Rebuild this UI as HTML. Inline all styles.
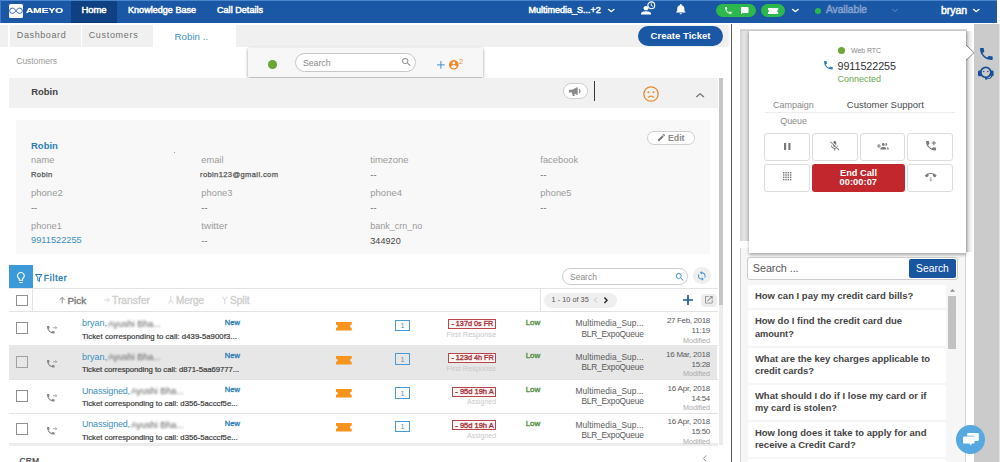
<!DOCTYPE html>
<html><head><meta charset="utf-8"><title>Ameyo</title>
<style>
*{box-sizing:border-box;margin:0;padding:0}
html,body{width:1000px;height:462px;overflow:hidden;background:#fff;font-family:"Liberation Sans",sans-serif;color:#555}
.a{position:absolute}
svg{position:absolute;overflow:visible}
.t{position:absolute;white-space:nowrap}
.btn{position:absolute;border:1px solid #dcdcdc;background:#fff;border-radius:3px}
.cb{position:absolute;width:12px;height:12px;border:1px solid #909090;background:#fff}
.kb{position:absolute;left:748px;width:198px;background:#fff;border-radius:2px}
.blur{filter:blur(1.1px)}
</style></head><body>
<div class="a" style="left:0px;top:0px;width:997.00px;height:23.30px;background:#1a57a4;"></div>
<div class="a" style="left:71px;top:0px;width:46.00px;height:23.30px;background:#0e4082;border-bottom:1px solid #0a3572"></div>
<div class="a" style="left:0px;top:0px;width:997.00px;height:1.00px;background:#4a86cc;"></div>
<div class="a" style="left:0px;top:0px;width:1.00px;height:23.30px;background:#3f7cc6;"></div>
<div class="a" style="left:9px;top:4px;width:14.00px;height:13.50px;background:#fff;border-radius:1.5px"></div>
<svg style="left:9px;top:4px;" width="14.00" height="13.50" viewBox="0 0 14 13.5" preserveAspectRatio="none"><path d="M7 6.750C5.300 4.300 4.200 4.100 3.300 4.100a2.650 2.650 0 0 0 0 5.300C4.200 9.400 5.300 9.200 7 6.750C8.700 4.300 9.800 4.100 10.700 4.100a2.650 2.650 0 0 1 0 5.300C9.800 9.400 8.700 9.200 7 6.750z" fill="none" stroke="#1a57a4" stroke-width=".9"/></svg>
<svg style="left:607.5px;top:8.5px;" width="6.50" height="3.00" viewBox="-0.8 -0.8 9.600000000000001 5.6" preserveAspectRatio="none"><polyline points="0,0 4,4 8,0" fill="none" stroke="#fff" stroke-width="2.3" stroke-linecap="round" stroke-linejoin="round"/></svg>
<svg style="left:640.7px;top:6px;" width="10.10" height="8.50" viewBox="4 4 16 16" preserveAspectRatio="none"><path d="M12 12c2.21 0 4-1.79 4-4s-1.79-4-4-4-4 1.79-4 4 1.79 4 4 4zm0 2c-2.67 0-8 1.34-8 4v2h16v-2c0-2.66-5.33-4-8-4z" fill="#fff"/></svg>
<svg style="left:646.8px;top:0.8px;" width="8.60" height="8.60" viewBox="0 0 10 10" preserveAspectRatio="none"><circle cx="5" cy="5" r="4" fill="#1a57a4" stroke="#fff" stroke-width="1.300"/><path d="M5 2.600V5.200L6.800 6.200" fill="none" stroke="#fff" stroke-width="1.100"/></svg>
<svg style="left:676px;top:4.3px;" width="9.60" height="10.20" viewBox="4 2.5 16 19.5" preserveAspectRatio="none"><path d="M12 22c1.1 0 2-.9 2-2h-4c0 1.1.89 2 2 2zm6-6v-5c0-3.07-1.64-5.64-4.5-6.32V4c0-.83-.67-1.5-1.5-1.5s-1.5.67-1.5 1.5v.68C7.63 5.36 6 7.92 6 11v5l-2 2v1h16v-1l-2-2z" fill="#fff"/></svg>
<div class="a" style="left:716.3px;top:4.3px;width:40.20px;height:12.70px;background:#2db84d;border-radius:7px"></div>
<svg style="left:725px;top:7.2px;" width="6.70" height="6.80" viewBox="3 3 18 18" preserveAspectRatio="none"><path d="M6.62 10.79c1.44 2.83 3.76 5.14 6.59 6.59l2.2-2.2c.27-.27.67-.36 1.02-.24 1.12.37 2.33.57 3.57.57.55 0 1 .45 1 1V20c0 .55-.45 1-1 1-9.39 0-17-7.61-17-17 0-.55.45-1 1-1h3.5c.55 0 1 .45 1 1 0 1.25.2 2.45.57 3.57.11.35.03.74-.25 1.02l-2.2 2.2z" fill="#fff"/></svg>
<svg style="left:740.8px;top:7px;" width="7.50" height="7.50" viewBox="2 2 20 20" preserveAspectRatio="none"><path d="M20 2H4c-1.1 0-2 .9-2 2v18l4-4h14c1.1 0 2-.9 2-2V4c0-1.1-.9-2-2-2z" fill="#fff"/></svg>
<div class="a" style="left:760.5px;top:4.3px;width:24.20px;height:12.70px;background:#2db84d;border-radius:7px"></div>
<svg style="left:767.5px;top:7.5px;" width="10.20" height="6.00" viewBox="0 0 16 10" preserveAspectRatio="none"><path d="M0 0h16v3.200a1.800 1.800 0 0 0 0 3.600V10H0V6.800a1.800 1.800 0 0 0 0-3.600z" fill="#fff"/></svg>
<svg style="left:792px;top:8.5px;" width="6.70" height="3.00" viewBox="-0.8 -0.8 9.600000000000001 5.6" preserveAspectRatio="none"><polyline points="0,0 4,4 8,0" fill="none" stroke="#fff" stroke-width="2.3" stroke-linecap="round" stroke-linejoin="round"/></svg>
<div class="a" style="left:814.5px;top:8px;width:6.00px;height:6.00px;background:#2db84d;border-radius:50%"></div>
<svg style="left:892px;top:8.5px;" width="6.00" height="2.80" viewBox="-0.8 -0.8 9.600000000000001 5.6" preserveAspectRatio="none"><polyline points="0,0 4,4 8,0" fill="none" stroke="#6f8fc2" stroke-width="1.6" stroke-linecap="round" stroke-linejoin="round"/></svg>
<svg style="left:973px;top:8.5px;" width="6.50" height="3.00" viewBox="-0.8 -0.8 9.600000000000001 5.6" preserveAspectRatio="none"><polyline points="0,0 4,4 8,0" fill="none" stroke="#fff" stroke-width="2.3" stroke-linecap="round" stroke-linejoin="round"/></svg>
<div class="a" style="left:0px;top:24.8px;width:7.80px;height:22.70px;background:#f0f0f0;"></div>
<div class="a" style="left:9.8px;top:24.8px;width:70.90px;height:22.70px;background:#f0f0f0;"></div>
<div class="a" style="left:82.3px;top:24.8px;width:70.70px;height:22.70px;background:#f0f0f0;"></div>
<div class="a" style="left:236px;top:24.8px;width:493.00px;height:22.70px;background:#f0f0f0;"></div>
<div class="a" style="left:638px;top:26px;width:84.50px;height:19.50px;background:#1a57a4;border-radius:10px"></div>
<div class="a" style="left:248px;top:48px;width:235.00px;height:28.50px;background:#f7f7f7;box-shadow:0 1px 3px rgba(0,0,0,.4)"></div>
<div class="a" style="left:268.2px;top:60.4px;width:8.60px;height:8.60px;background:#6aa638;border-radius:50%"></div>
<div class="a" style="left:294.6px;top:52.5px;width:121.70px;height:19.50px;background:#fff;border:1px solid #c8c8c8;border-radius:10px"></div>
<svg style="left:401.7px;top:58.3px;" width="8.60" height="8.00" viewBox="3 3 17.5 17.5" preserveAspectRatio="none"><path d="M15.5 14h-.79l-.28-.27C15.41 12.59 16 11.11 16 9.5 16 5.91 13.09 3 9.5 3S3 5.91 3 9.5 5.91 16 9.5 16c1.61 0 3.09-.59 4.23-1.57l.27.28v.79l5 4.99L20.49 19l-4.99-5zm-6 0C7.01 14 5 11.99 5 9.5S7.01 5 9.5 5 14 7.01 14 9.5 11.99 14 9.5 14z" fill="#8a8a8a"/></svg>
<svg style="left:436.8px;top:60.8px;" width="7.80" height="7.80" viewBox="0 0 8 8" preserveAspectRatio="none"><path d="M4 0V8M0 4H8" stroke="#3d8fd0" stroke-width="1" fill="none"/></svg>
<svg style="left:448.8px;top:59.6px;" width="9.60" height="9.60" viewBox="2 2 20 20" preserveAspectRatio="none"><path d="M12 2C6.480 2 2 6.480 2 12s4.480 10 10 10 10-4.480 10-10S17.520 2 12 2zm0 3c1.660 0 3 1.340 3 3s-1.340 3-3 3-3-1.340-3-3 1.340-3 3-3zm0 14.200c-2.500 0-4.710-1.280-6-3.220.030-1.990 4-3.080 6-3.080 1.990 0 5.970 1.090 6 3.080-1.290 1.940-3.500 3.220-6 3.220z" fill="#ee8a2a"/></svg>
<div class="a" style="left:8.5px;top:77.8px;width:709.80px;height:30.20px;background:#f1f1f1;"></div>
<div class="a" style="left:563px;top:82.8px;width:25.20px;height:16.20px;background:#fff;border:1px solid #cfcfcf;border-radius:9px"></div>
<svg style="left:569px;top:86.5px;" width="13.50" height="9.00" viewBox="0 0 14 9" preserveAspectRatio="none"><path d="M0 2.800h3.200L9 0v8.200L3.200 5.600H0zM3 5.800h2.200l.9 3.200H3.900z" fill="#8a8a8a"/><path d="M10.300 2.200a2.200 2.200 0 0 1 0 3.800" fill="none" stroke="#8a8a8a" stroke-width="1.300"/></svg>
<div class="a" style="left:594.2px;top:81.4px;width:1.30px;height:19.40px;background:#3a3a3a;"></div>
<svg style="left:643.3px;top:85.5px;" width="16.00" height="16.00" viewBox="0 0 16 16" preserveAspectRatio="none"><circle cx="8" cy="8" r="7.200" fill="none" stroke="#e8892f" stroke-width="1.300"/><circle cx="5.500" cy="6.200" r="1" fill="#e8892f"/><circle cx="10.500" cy="6.200" r="1" fill="#e8892f"/><path d="M5 11.500Q8 8.800 11 11.500" fill="none" stroke="#e8892f" stroke-width="1.300"/></svg>
<svg style="left:695.8px;top:92.7px;" width="8.20" height="4.30" viewBox="-0.8 -0.8 9.600000000000001 5.6" preserveAspectRatio="none"><polyline points="0,4 4,0 8,4" fill="none" stroke="#7a7a7a" stroke-width="1.7" stroke-linecap="round" stroke-linejoin="round"/></svg>
<div class="a" style="left:16px;top:120px;width:693.50px;height:133.50px;background:#f8f8f8;"></div>
<div class="a" style="left:174px;top:152px;width:1.00px;height:1.00px;background:#999;"></div>
<div class="a" style="left:647px;top:130.5px;width:47.50px;height:14.30px;background:#fff;border:1px solid #cfcfcf;border-radius:8px"></div>
<svg style="left:658px;top:134px;" width="7.00" height="7.00" viewBox="3 3 18 18" preserveAspectRatio="none"><path d="M3 17.250V21h3.750L17.810 9.940l-3.750-3.750L3 17.250zM20.710 7.040c.39-.39.39-1.020 0-1.410l-2.340-2.340c-.39-.39-1.020-.39-1.410 0l-1.830 1.830 3.750 3.750 1.830-1.830z" fill="#7a7a7a"/></svg>
<div class="a" style="left:718.5px;top:77.8px;width:4.50px;height:227.20px;background:#c6c6c6;"></div>
<div class="a" style="left:718.5px;top:305px;width:4.50px;height:140.00px;background:#ececec;"></div>
<div class="a" style="left:730.5px;top:24px;width:1.20px;height:438.00px;background:#5a5a5a;"></div>
<div class="a" style="left:8.5px;top:265.3px;width:24.80px;height:22.70px;background:#3d9ad8;"></div>
<svg style="left:16.6px;top:271.6px;" width="7.80" height="11.00" viewBox="5 2 14 20" preserveAspectRatio="none"><path d="M9 21c0 .55.45 1 1 1h4c.55 0 1-.45 1-1v-1H9v1zm3-19C8.140 2 5 5.140 5 9c0 2.380 1.190 4.470 3 5.740V17c0 .55.45 1 1 1h6c.55 0 1-.45 1-1v-2.260c1.810-1.270 3-3.360 3-5.740 0-3.860-3.140-7-7-7zm2.850 11.100l-.85.6V16h-4v-2.300l-.85-.6C7.800 12.160 7 10.630 7 9c0-2.760 2.240-5 5-5s5 2.240 5 5c0 1.630-.8 3.160-2.150 4.100z" fill="#fff"/></svg>
<svg style="left:35px;top:273.8px;" width="7.40" height="8.00" viewBox="0 0 8 8.5" preserveAspectRatio="none"><path d="M.6.600h6.800L4.900 4V7.800L3.100 6.800V4z" fill="none" stroke="#2f7fb5" stroke-width="1.100" stroke-linejoin="round"/></svg>
<div class="a" style="left:561.7px;top:267.6px;width:126.00px;height:17.40px;background:#fff;border:1px solid #cbcbcb;border-radius:9px"></div>
<svg style="left:675.6px;top:273px;" width="7.60" height="7.80" viewBox="3 3 17.5 17.5" preserveAspectRatio="none"><path d="M15.5 14h-.79l-.28-.27C15.41 12.59 16 11.11 16 9.5 16 5.91 13.09 3 9.5 3S3 5.91 3 9.5 5.91 16 9.5 16c1.61 0 3.09-.59 4.23-1.57l.27.28v.79l5 4.99L20.49 19l-4.99-5zm-6 0C7.01 14 5 11.99 5 9.5S7.01 5 9.5 5 14 7.01 14 9.5 11.99 14 9.5 14z" fill="#3d8fd0"/></svg>
<div class="a" style="left:693.2px;top:267px;width:17.40px;height:17.40px;background:#efefef;border-radius:50%"></div>
<svg style="left:698.2px;top:270.8px;" width="7.60" height="9.80" viewBox="4 1 16 22" preserveAspectRatio="none"><path d="M12 4V1L8 5l4 4V6c3.310 0 6 2.690 6 6 0 1.010-.25 1.970-.7 2.800l1.460 1.460C19.540 15.030 20 13.570 20 12c0-4.420-3.580-8-8-8zm0 14c-3.310 0-6-2.690-6-6 0-1.010.25-1.970.7-2.800L5.240 7.740C4.460 8.970 4 10.430 4 12c0 4.420 3.580 8 8 8v3l4-4-4-4v3z" fill="#3d8fd0"/></svg>
<div class="a" style="left:8.5px;top:288px;width:709.50px;height:1.00px;background:#e3e3e3;"></div>
<div class="a" style="left:8.5px;top:311.2px;width:709.50px;height:1.00px;background:#e3e3e3;"></div>
<div class="a" style="left:32.3px;top:288px;width:1.00px;height:23.00px;background:#e3e3e3;"></div>
<div class="a" style="left:540px;top:288px;width:1.00px;height:23.00px;background:#e3e3e3;"></div>
<div class="cb" style="left:15.800px;top:294.800px;height:11.200px"></div>
<svg style="left:59.2px;top:296.6px;" width="6.40" height="6.40" viewBox="0 0 7 8" preserveAspectRatio="none"><path d="M3.500 8V.8M.7 3.500L3.500.7 6.300 3.500" fill="none" stroke="#7a7a7a" stroke-width="1"/></svg>
<svg style="left:104px;top:297px;" width="6.00" height="6.00" viewBox="0 0 7 7" preserveAspectRatio="none"><path d="M0 3.500H6.300M3.500.7 6.300 3.500 3.500 6.300" fill="none" stroke="#d4d4d4" stroke-width="1"/></svg>
<svg style="left:167.5px;top:296px;" width="5.50" height="8.00" viewBox="0 0 6 8" preserveAspectRatio="none"><path d="M3 0V4L.5 7.500M3 4L5.500 7.500" fill="none" stroke="#d4d4d4" stroke-width="1"/></svg>
<svg style="left:222px;top:296px;" width="5.50" height="8.00" viewBox="0 0 6 8" preserveAspectRatio="none"><path d="M3 8V4L.5.500M3 4L5.500.500" fill="none" stroke="#d4d4d4" stroke-width="1"/></svg>
<div class="a" style="left:544px;top:293px;width:73.00px;height:14.60px;background:#efefef;border-radius:8px"></div>
<svg style="left:594px;top:297.3px;" width="3.30" height="5.70" viewBox="0 0 4 7" preserveAspectRatio="none"><polyline points="3.500,.5 .6,3.500 3.500,6.500" fill="none" stroke="#bbb" stroke-width="1"/></svg>
<svg style="left:603.7px;top:297px;" width="3.60" height="6.40" viewBox="0 0 4 7" preserveAspectRatio="none"><polyline points=".5,.5 3.400,3.500 .5,6.500" fill="none" stroke="#222" stroke-width="1.500"/></svg>
<svg style="left:683px;top:295px;" width="10.00" height="10.00" viewBox="0 0 10 10" preserveAspectRatio="none"><path d="M5 0V10M0 5H10" stroke="#1a57a4" stroke-width="1.700" fill="none"/></svg>
<div class="a" style="left:701px;top:293.8px;width:15.70px;height:12.80px;background:#ededed;border-radius:4px"></div>
<svg style="left:705px;top:296.4px;" width="7.60" height="7.60" viewBox="3 3 18 18" preserveAspectRatio="none"><path d="M19 19H5V5h7V3H5c-1.110 0-2 .9-2 2v14c0 1.100.89 2 2 2h14c1.100 0 2-.9 2-2v-7h-2v7zM14 3v2h3.590l-9.830 9.830 1.410 1.410L19 6.410V10h2V3h-7z" fill="#8a8a8a"/></svg>
<div class="a" style="left:8.5px;top:344.9px;width:709.50px;height:1.00px;background:#e3e3e3;"></div>
<div class="cb" style="left:16px;top:322.00px;"></div>
<svg style="left:47px;top:326.0px;" width="7.60" height="7.60" viewBox="3 3 18 18" preserveAspectRatio="none"><path d="M6.62 10.79c1.44 2.83 3.76 5.14 6.59 6.59l2.2-2.2c.27-.27.67-.36 1.02-.24 1.12.37 2.33.57 3.57.57.55 0 1 .45 1 1V20c0 .55-.45 1-1 1-9.39 0-17-7.61-17-17 0-.55.45-1 1-1h3.5c.55 0 1 .45 1 1 0 1.25.2 2.45.57 3.57.11.35.03.74-.25 1.02l-2.2 2.2z" fill="#858585"/></svg>
<svg style="left:53.3px;top:326.2px;" width="4.20" height="3.40" viewBox="0 0 5 4" preserveAspectRatio="none"><path d="M0 2H4.300M2.800.4L4.400 2 2.800 3.600" fill="none" stroke="#858585" stroke-width=".8"/></svg>
<svg style="left:336px;top:321.8px;" width="15.70" height="8.60" viewBox="0 0 16 10" preserveAspectRatio="none"><path d="M0 0h16v3.200a1.800 1.800 0 0 0 0 3.600V10H0V6.800a1.800 1.800 0 0 0 0-3.600z" fill="#f7941d"/></svg>
<div class="a" style="left:395px;top:319.5px;width:15.00px;height:11.50px;background:transparent;border:1px solid #4a9bd4"></div>
<div class="a" style="left:448.4px;top:319.0px;width:48.00px;height:10.20px;background:#fdf7f7;border:1px solid #b8474c"></div>
<div class="a" style="left:8.5px;top:345.2px;width:708.50px;height:34.00px;background:#e7e7e7;"></div>
<div class="a" style="left:8.5px;top:379.04999999999995px;width:709.50px;height:1.00px;background:#e3e3e3;"></div>
<div class="cb" style="left:16px;top:355.75px;background:#e7e7e7;border-color:#a0a0a0"></div>
<svg style="left:47px;top:359.75px;" width="7.60" height="7.60" viewBox="3 3 18 18" preserveAspectRatio="none"><path d="M6.62 10.79c1.44 2.83 3.76 5.14 6.59 6.59l2.2-2.2c.27-.27.67-.36 1.02-.24 1.12.37 2.33.57 3.57.57.55 0 1 .45 1 1V20c0 .55-.45 1-1 1-9.39 0-17-7.61-17-17 0-.55.45-1 1-1h3.5c.55 0 1 .45 1 1 0 1.25.2 2.45.57 3.57.11.35.03.74-.25 1.02l-2.2 2.2z" fill="#858585"/></svg>
<svg style="left:53.3px;top:359.95px;" width="4.20" height="3.40" viewBox="0 0 5 4" preserveAspectRatio="none"><path d="M0 2H4.300M2.800.4L4.400 2 2.800 3.600" fill="none" stroke="#858585" stroke-width=".8"/></svg>
<svg style="left:336px;top:355.55px;" width="15.70" height="8.60" viewBox="0 0 16 10" preserveAspectRatio="none"><path d="M0 0h16v3.200a1.800 1.800 0 0 0 0 3.600V10H0V6.800a1.800 1.800 0 0 0 0-3.600z" fill="#f7941d"/></svg>
<div class="a" style="left:395px;top:353.25px;width:15.00px;height:11.50px;background:transparent;border:1px solid #4a9bd4"></div>
<div class="a" style="left:448.4px;top:352.75px;width:48.00px;height:10.20px;background:#fdf7f7;border:1px solid #b8474c"></div>
<div class="a" style="left:8.5px;top:413.2px;width:709.50px;height:1.00px;background:#e3e3e3;"></div>
<div class="cb" style="left:16px;top:389.50px;"></div>
<svg style="left:47px;top:393.5px;" width="7.60" height="7.60" viewBox="3 3 18 18" preserveAspectRatio="none"><path d="M6.62 10.79c1.44 2.83 3.76 5.14 6.59 6.59l2.2-2.2c.27-.27.67-.36 1.02-.24 1.12.37 2.33.57 3.57.57.55 0 1 .45 1 1V20c0 .55-.45 1-1 1-9.39 0-17-7.61-17-17 0-.55.45-1 1-1h3.5c.55 0 1 .45 1 1 0 1.25.2 2.45.57 3.57.11.35.03.74-.25 1.02l-2.2 2.2z" fill="#858585"/></svg>
<svg style="left:53.3px;top:393.7px;" width="4.20" height="3.40" viewBox="0 0 5 4" preserveAspectRatio="none"><path d="M0 2H4.300M2.800.4L4.400 2 2.800 3.600" fill="none" stroke="#858585" stroke-width=".8"/></svg>
<svg style="left:336px;top:389.3px;" width="15.70" height="8.60" viewBox="0 0 16 10" preserveAspectRatio="none"><path d="M0 0h16v3.200a1.800 1.800 0 0 0 0 3.600V10H0V6.800a1.800 1.800 0 0 0 0-3.600z" fill="#f7941d"/></svg>
<div class="a" style="left:395px;top:387.0px;width:15.00px;height:11.50px;background:transparent;border:1px solid #4a9bd4"></div>
<div class="a" style="left:452.3px;top:386.5px;width:44.10px;height:10.20px;background:#fdf7f7;border:1px solid #b8474c"></div>
<div class="cb" style="left:16px;top:423.25px;"></div>
<svg style="left:47px;top:427.25px;" width="7.60" height="7.60" viewBox="3 3 18 18" preserveAspectRatio="none"><path d="M6.62 10.79c1.44 2.83 3.76 5.14 6.59 6.59l2.2-2.2c.27-.27.67-.36 1.02-.24 1.12.37 2.33.57 3.57.57.55 0 1 .45 1 1V20c0 .55-.45 1-1 1-9.39 0-17-7.61-17-17 0-.55.45-1 1-1h3.5c.55 0 1 .45 1 1 0 1.25.2 2.45.57 3.57.11.35.03.74-.25 1.02l-2.2 2.2z" fill="#858585"/></svg>
<svg style="left:53.3px;top:427.45px;" width="4.20" height="3.40" viewBox="0 0 5 4" preserveAspectRatio="none"><path d="M0 2H4.300M2.800.4L4.400 2 2.800 3.600" fill="none" stroke="#858585" stroke-width=".8"/></svg>
<svg style="left:336px;top:423.05px;" width="15.70" height="8.60" viewBox="0 0 16 10" preserveAspectRatio="none"><path d="M0 0h16v3.200a1.800 1.800 0 0 0 0 3.600V10H0V6.800a1.800 1.800 0 0 0 0-3.600z" fill="#f7941d"/></svg>
<div class="a" style="left:395px;top:420.75px;width:15.00px;height:11.50px;background:transparent;border:1px solid #4a9bd4"></div>
<div class="a" style="left:452.3px;top:420.25px;width:44.10px;height:10.20px;background:#fdf7f7;border:1px solid #b8474c"></div>
<div class="a" style="left:8.5px;top:443px;width:709.50px;height:2.50px;background:#ececec;"></div>
<div class="a" style="left:8.5px;top:445.5px;width:720.50px;height:16.50px;background:#fff;"></div>
<svg style="left:703px;top:455px;" width="3.50" height="7.00" viewBox="0 0 4 7" preserveAspectRatio="none"><polyline points="3.500,.5 .6,3.500 3.500,6.500" fill="none" stroke="#888" stroke-width="1"/></svg>
<div class="a" style="left:974px;top:24px;width:25.00px;height:438.00px;background:#cbcbcb;"></div>
<div class="a" style="left:999px;top:24px;width:1.00px;height:438.00px;background:#e0e0e0;"></div>
<div class="a" style="left:739.5px;top:248px;width:226.50px;height:214.00px;background:#f6f6f6;border-left:1px solid #d4d4d4;border-right:1px solid #d4d4d4"></div>
<div class="a" style="left:739.5px;top:28.6px;width:9.00px;height:212.40px;background:;background:linear-gradient(90deg,#d2d2d2,#e6e6e6 45%,#d0d0d0)"></div>
<div class="a" style="left:739.5px;top:28.6px;width:227.00px;height:2.40px;background:;background:linear-gradient(180deg,#dcdcdc,#cacaca)"></div>
<div class="a" style="left:966.2px;top:31px;width:6.80px;height:221.00px;background:;background:linear-gradient(90deg,#bdbdbd,#e4e4e4 40%,#fff)"></div>
<div class="a" style="left:748.5px;top:30.8px;width:217.70px;height:222.00px;background:#fff;box-shadow:0 2px 3px 0 rgba(0,0,0,.3)"></div>
<svg style="left:966.2px;top:44.8px;" width="8.00" height="15.40" viewBox="0 0 8 15.4" preserveAspectRatio="none"><path d="M-1 -1.500V0L8 7.700L-1 15.400V17z" fill="#fff"/><path d="M0 0L8 7.700L0 15.400" fill="none" stroke="#6a6a6a" stroke-width=".8"/></svg>
<svg style="left:979.6px;top:47.6px;" width="12.70" height="12.00" viewBox="3 3 18 18" preserveAspectRatio="none"><path d="M6.62 10.79c1.44 2.83 3.76 5.14 6.59 6.59l2.2-2.2c.27-.27.67-.36 1.02-.24 1.12.37 2.33.57 3.57.57.55 0 1 .45 1 1V20c0 .55-.45 1-1 1-9.39 0-17-7.61-17-17 0-.55.45-1 1-1h3.5c.55 0 1 .45 1 1 0 1.25.2 2.45.57 3.57.11.35.03.74-.25 1.02l-2.2 2.2z" fill="#1a4f96"/></svg>
<svg style="left:978.2px;top:66.3px;" width="15.60" height="13.70" viewBox="0 0 16 14" preserveAspectRatio="none"><circle cx="8" cy="6.500" r="5.200" fill="none" stroke="#1a4f96" stroke-width="1.800"/><rect x="0" y="4.500" width="3.600" height="6" rx="1.400" fill="#1a4f96"/><rect x="12.400" y="4.500" width="3.600" height="6" rx="1.400" fill="#1a4f96"/><circle cx="5.900" cy="5.600" r=".8" fill="#1a4f96"/><circle cx="10.100" cy="5.600" r=".8" fill="#1a4f96"/><path d="M14 10.200Q13.500 13 9 13" fill="none" stroke="#1a4f96" stroke-width="1.100"/><circle cx="8.300" cy="13" r="1.100" fill="#1a4f96"/></svg>
<div class="a" style="left:838.1px;top:46.7px;width:7.20px;height:7.20px;background:#6aa638;border-radius:50%"></div>
<svg style="left:823.9px;top:61.3px;" width="8.80" height="8.50" viewBox="3 3 18 18" preserveAspectRatio="none"><path d="M6.62 10.79c1.44 2.83 3.76 5.14 6.59 6.59l2.2-2.2c.27-.27.67-.36 1.02-.24 1.12.37 2.33.57 3.57.57.55 0 1 .45 1 1V20c0 .55-.45 1-1 1-9.39 0-17-7.61-17-17 0-.55.45-1 1-1h3.5c.55 0 1 .45 1 1 0 1.25.2 2.45.57 3.57.11.35.03.74-.25 1.02l-2.2 2.2z" fill="#2f7fc0"/></svg>
<div class="a" style="left:764.5px;top:112.3px;width:190.00px;height:1.00px;background:#ececec;"></div>
<div class="btn" style="left:764px;top:133.4px;width:45.60px;height:27.60px;background:#fff;"></div>
<div class="btn" style="left:812px;top:133.4px;width:45.60px;height:27.60px;background:#fff;"></div>
<div class="btn" style="left:859.8px;top:133.4px;width:45.40px;height:27.60px;background:#fff;"></div>
<div class="btn" style="left:907.3px;top:133.4px;width:45.50px;height:27.60px;background:#fff;"></div>
<div class="btn" style="left:764px;top:164.3px;width:45.60px;height:27.60px;background:#fff;"></div>
<div class="btn" style="left:907.3px;top:164.3px;width:45.50px;height:27.60px;background:#fff;"></div>
<div class="a" style="left:812px;top:164.3px;width:93.20px;height:27.60px;background:#c1272d;border-radius:3px"></div>
<svg style="left:783.8px;top:142.8px;" width="6.50" height="7.00" viewBox="6 5 12 14" preserveAspectRatio="none"><path d="M6 19h4V5H6v14zm8-14v14h4V5h-4z" fill="#7a7a7a"/></svg>
<svg style="left:830px;top:141.4px;" width="9.40" height="9.40" viewBox="3 2 18 19" preserveAspectRatio="none"><path d="M19 11h-1.700c0 .74-.16 1.43-.43 2.050l1.230 1.230c.56-.98.9-2.090.9-3.280zm-4.020.17c0-.060.020-.11.020-.17V5c0-1.660-1.340-3-3-3S9 3.340 9 5v.18l5.980 5.990zM4.270 3L3 4.270l6.010 6.010V11c0 1.660 1.330 3 2.990 3 .22 0 .44-.030.65-.080l1.660 1.660c-.71.33-1.500.52-2.310.52-2.760 0-5.300-2.100-5.300-5.100H5c0 3.410 2.720 6.230 6 6.720V21h2v-3.280c.91-.13 1.770-.45 2.540-.9L19.730 21 21 19.730 4.270 3z" fill="#7a7a7a"/></svg>
<svg style="left:876.8px;top:142.8px;" width="11.70" height="6.40" viewBox="0 5 24 13" preserveAspectRatio="none"><path d="M8 10H5V7H3v3H0v2h3v3h2v-3h3v-2zm10 1c1.660 0 2.990-1.340 2.990-3S19.660 5 18 5c-.32 0-.63.050-.91.14.57.81.9 1.790.9 2.860s-.34 2.040-.9 2.860c.28.090.59.14.91.14zm-5 0c1.660 0 2.990-1.340 2.990-3S14.660 5 13 5c-1.660 0-3 1.340-3 3s1.340 3 3 3zm6.620 2.160c.83.73 1.380 1.660 1.380 2.840v2h3v-2c0-1.540-2.370-2.490-4.380-2.840zM13 13c-2 0-6 1-6 3v2h12v-2c0-2-4-3-6-3z" fill="#7a7a7a"/></svg>
<svg style="left:925.5px;top:141.4px;" width="10.10" height="9.40" viewBox="3 3 18 18" preserveAspectRatio="none"><path d="M20 15.500c-1.250 0-2.450-.2-3.570-.57-.35-.11-.74-.030-1.020.24l-2.200 2.200c-2.830-1.440-5.150-3.750-6.590-6.590l2.200-2.210c.28-.26.36-.65.25-1C8.700 6.450 8.500 5.250 8.500 4c0-.55-.45-1-1-1H4c-.55 0-1 .45-1 1 0 9.390 7.610 17 17 17 .55 0 1-.45 1-1v-3.500c0-.55-.45-1-1-1zM21 6h-3V3h-2v3h-3v2h3v3h2V8h3z" fill="#7a7a7a"/></svg>
<svg style="left:783px;top:172px;" width="8.20" height="8.20" viewBox="0 0 8.5 8.5" preserveAspectRatio="none"><rect x="0.0" y="0.0" width="1.500" height="1.500" fill="#7a7a7a"/><rect x="2.4" y="0.0" width="1.500" height="1.500" fill="#7a7a7a"/><rect x="4.8" y="0.0" width="1.500" height="1.500" fill="#7a7a7a"/><rect x="7.2" y="0.0" width="1.500" height="1.500" fill="#7a7a7a"/><rect x="0.0" y="2.4" width="1.500" height="1.500" fill="#7a7a7a"/><rect x="2.4" y="2.4" width="1.500" height="1.500" fill="#7a7a7a"/><rect x="4.8" y="2.4" width="1.500" height="1.500" fill="#7a7a7a"/><rect x="7.2" y="2.4" width="1.500" height="1.500" fill="#7a7a7a"/><rect x="0.0" y="4.8" width="1.500" height="1.500" fill="#7a7a7a"/><rect x="2.4" y="4.8" width="1.500" height="1.500" fill="#7a7a7a"/><rect x="4.8" y="4.8" width="1.500" height="1.500" fill="#7a7a7a"/><rect x="7.2" y="4.8" width="1.500" height="1.500" fill="#7a7a7a"/><rect x="0.0" y="7.2" width="1.500" height="1.500" fill="#7a7a7a"/><rect x="2.4" y="7.2" width="1.500" height="1.500" fill="#7a7a7a"/><rect x="4.8" y="7.2" width="1.500" height="1.500" fill="#7a7a7a"/><rect x="7.2" y="7.2" width="1.500" height="1.500" fill="#7a7a7a"/></svg>
<svg style="left:924.7px;top:173px;" width="11.50" height="4.40" viewBox="0 7 24 9" preserveAspectRatio="none"><path d="M12 9c-1.600 0-3.150.25-4.600.72v3.100c0 .39-.23.74-.56.9-.98.49-1.870 1.120-2.660 1.850-.18.18-.43.28-.7.28-.28 0-.53-.11-.71-.29L.29 13.080c-.18-.17-.29-.42-.29-.7 0-.28.11-.53.29-.71C3.340 8.780 7.460 7 12 7s8.660 1.780 11.710 4.670c.18.18.29.43.29.71 0 .28-.11.53-.29.71l-2.480 2.480c-.18.18-.43.29-.71.29-.27 0-.52-.11-.7-.28-.79-.74-1.690-1.360-2.670-1.850-.33-.16-.56-.5-.56-.9v-3.100C15.150 9.250 13.600 9 12 9z" fill="#7a7a7a"/></svg>
<svg style="left:928.7px;top:177.3px;" width="3.60" height="4.40" viewBox="0 0 4 5" preserveAspectRatio="none"><path d="M2 0V4.500M.5 3L2 4.500 3.500 3" fill="none" stroke="#7a7a7a" stroke-width=".7"/></svg>
<div class="a" style="left:747.2px;top:257px;width:211.20px;height:23.20px;background:#fff;border:1px solid #cdcdcd;border-radius:3px"></div>
<div class="a" style="left:908.5px;top:258.8px;width:47.30px;height:19.40px;background:#1a55a0;border-radius:2px"></div>
<div class="a" style="left:747.5px;top:284.7px;width:198.20px;height:23.10px;background:#fff;border-radius:2px"></div>
<div class="a" style="left:747.5px;top:310px;width:198.20px;height:35.60px;background:#fff;border-radius:2px"></div>
<div class="a" style="left:747.5px;top:347.5px;width:198.20px;height:35.00px;background:#fff;border-radius:2px"></div>
<div class="a" style="left:747.5px;top:384.5px;width:198.20px;height:35.00px;background:#fff;border-radius:2px"></div>
<div class="a" style="left:747.5px;top:421.5px;width:198.20px;height:35.00px;background:#fff;border-radius:2px"></div>
<div class="a" style="left:747.5px;top:458.5px;width:198.20px;height:11.50px;background:#fff;border-radius:2px"></div>
<div class="a" style="left:948.3px;top:296px;width:8.00px;height:53.00px;background:#c1c1c1;"></div>
<svg style="left:949.8px;top:288.5px;" width="5.00" height="2.70" viewBox="0 0 6 3" preserveAspectRatio="none"><path d="M0 3L3 0L6 3z" fill="#8a8a8a"/></svg>
<div class="a" style="left:956.4px;top:424.8px;width:29.00px;height:29.00px;background:#56a8e0;border-radius:50%"></div>
<svg style="left:963.2px;top:433.4px;" width="16.00" height="13.00" viewBox="0 0 16 13" preserveAspectRatio="none"><rect x="4.200" y="0" width="11.600" height="8" rx="1.200" fill="#fff"/><rect x="-.6" y="2.700" width="12" height="8.400" rx="1.500" fill="#56a8e0"/><path d="M1.200 3.400h9.200a1.200 1.200 0 0 1 1.200 1.200v4.800a1.200 1.200 0 0 1-1.200 1.200H9l-1.400 1.900L6.400 10.600H1.200a1.200 1.200 0 0 1-1.200-1.200V4.600a1.200 1.200 0 0 1 1.200-1.200z" fill="#fff"/></svg>
<span class="t" style="left:26px;top:4.00px;font-size:6.6px;color:#fff;line-height:14px;font-weight:bold;transform:scaleX(1.5297);transform-origin:0 50%;-webkit-text-stroke:.2px #fff;">AMEYO</span>
<span class="t" style="left:81.5px;top:3.20px;font-size:9.5px;color:#fff;line-height:14px;letter-spacing:-0.090px;-webkit-text-stroke:.5px #fff;">Home</span>
<span class="t" style="left:128px;top:3.20px;font-size:9.0px;color:#fff;line-height:14px;letter-spacing:0.039px;-webkit-text-stroke:.5px #fff;">Knowledge Base</span>
<span class="t" style="left:217px;top:3.20px;font-size:9.0px;color:#fff;line-height:14px;letter-spacing:0.047px;-webkit-text-stroke:.5px #fff;">Call Details</span>
<span class="t" style="left:528.5px;top:3.20px;font-size:9.0px;color:#fff;line-height:14px;-webkit-text-stroke:.5px #fff;">Multimedia_S...+2</span>
<span class="t" style="left:826px;top:3.20px;font-size:10.25px;color:#7f9dca;line-height:14px;letter-spacing:-0.043px;-webkit-text-stroke:.5px #86a3cf;">Available</span>
<span class="t" style="left:941px;top:3.20px;font-size:10.5px;color:#fff;line-height:14px;letter-spacing:-0.052px;-webkit-text-stroke:.5px #fff;">bryan</span>
<span class="t" style="left:16.8px;top:27.80px;font-size:9px;color:#707070;line-height:14px;letter-spacing:0.608px;">Dashboard</span>
<span class="t" style="left:88.7px;top:27.80px;font-size:9px;color:#707070;line-height:14px;letter-spacing:0.681px;">Customers</span>
<span class="t" style="left:174.5px;top:30.00px;font-size:9.75px;color:#3d8fc0;line-height:14px;">Robin ..</span>
<span class="t" style="left:650.5px;top:28.50px;font-size:9.5px;color:#fff;line-height:14px;font-weight:bold;letter-spacing:0.040px;">Create Ticket</span>
<span class="t" style="left:16.3px;top:54.30px;font-size:8.5px;color:#999;line-height:14px;letter-spacing:-0.046px;">Customers</span>
<span class="t" style="left:303px;top:55.50px;font-size:8.75px;color:#8a8a8a;line-height:14px;letter-spacing:-0.041px;">Search</span>
<span class="t" style="left:459px;top:54.50px;font-size:7.25px;color:#ee8a2a;line-height:14px;letter-spacing:-0.046px;">2</span>
<span class="t" style="left:31.2px;top:85.00px;font-size:9.5px;color:#444;line-height:14px;font-weight:bold;letter-spacing:-0.025px;">Robin</span>
<span class="t" style="left:31px;top:138.70px;font-size:9.5px;color:#2f7fb5;line-height:14px;font-weight:bold;">Robin</span>
<span class="t" style="left:31px;top:153.00px;font-size:9.25px;color:#9a9a9a;line-height:14px;letter-spacing:0.074px;">name</span>
<span class="t" style="left:201.3px;top:153.00px;font-size:9.25px;color:#9a9a9a;line-height:14px;letter-spacing:0.021px;">email</span>
<span class="t" style="left:370.3px;top:153.00px;font-size:9.5px;color:#9a9a9a;line-height:14px;letter-spacing:-0.048px;">timezone</span>
<span class="t" style="left:540.3px;top:153.00px;font-size:9.25px;color:#9a9a9a;line-height:14px;letter-spacing:0.047px;">facebook</span>
<span class="t" style="left:31px;top:186.00px;font-size:9.5px;color:#9a9a9a;line-height:14px;">phone2</span>
<span class="t" style="left:201.3px;top:186.00px;font-size:9.25px;color:#9a9a9a;line-height:14px;letter-spacing:0.060px;">phone3</span>
<span class="t" style="left:370.3px;top:186.00px;font-size:9.5px;color:#9a9a9a;line-height:14px;">phone4</span>
<span class="t" style="left:540.3px;top:186.00px;font-size:9.25px;color:#9a9a9a;line-height:14px;letter-spacing:0.060px;">phone5</span>
<span class="t" style="left:31px;top:219.00px;font-size:9.25px;color:#9a9a9a;line-height:14px;">phone1</span>
<span class="t" style="left:201.3px;top:219.00px;font-size:9.75px;color:#9a9a9a;line-height:14px;letter-spacing:0.045px;">twitter</span>
<span class="t" style="left:370.3px;top:219.00px;font-size:9.0px;color:#9a9a9a;line-height:14px;">bank_crn_no</span>
<span class="t" style="left:31px;top:168.00px;font-size:7.6px;color:#555;line-height:14px;letter-spacing:0.368px;-webkit-text-stroke:.25px #555;">Robin</span>
<span class="t" style="left:200px;top:168.00px;font-size:7.6px;color:#555;line-height:14px;letter-spacing:0.361px;-webkit-text-stroke:.25px #555;">robin123@gmail.com</span>
<span class="t" style="left:370.3px;top:168.00px;font-size:9.25px;color:#666;line-height:14px;letter-spacing:0.022px;">--</span>
<span class="t" style="left:540.3px;top:168.00px;font-size:9.25px;color:#666;line-height:14px;letter-spacing:0.022px;">--</span>
<span class="t" style="left:31px;top:201.00px;font-size:9.25px;color:#666;line-height:14px;letter-spacing:0.022px;">--</span>
<span class="t" style="left:201.3px;top:201.00px;font-size:9.25px;color:#666;line-height:14px;letter-spacing:0.022px;">--</span>
<span class="t" style="left:370.3px;top:201.00px;font-size:9.25px;color:#666;line-height:14px;letter-spacing:0.022px;">--</span>
<span class="t" style="left:540.3px;top:201.00px;font-size:9.25px;color:#666;line-height:14px;letter-spacing:0.022px;">--</span>
<span class="t" style="left:201.3px;top:233.50px;font-size:9.25px;color:#666;line-height:14px;letter-spacing:0.022px;">--</span>
<span class="t" style="left:31px;top:233.20px;font-size:9.25px;color:#3d8fc0;line-height:14px;">9911522255</span>
<span class="t" style="left:370.3px;top:233.50px;font-size:9.0px;color:#444;line-height:14px;letter-spacing:0.066px;">344920</span>
<span class="t" style="left:668px;top:131.00px;font-size:8.75px;color:#8a8a8a;line-height:14px;font-weight:bold;">Edit</span>
<span class="t" style="left:43.8px;top:270.80px;font-size:8.4px;color:#2f7fb5;line-height:14px;letter-spacing:0.832px;-webkit-text-stroke:.4px #2f7fb5;">Filter</span>
<span class="t" style="left:570px;top:269.70px;font-size:8.5px;color:#8a8a8a;line-height:14px;">Search</span>
<span class="t" style="left:67.6px;top:293.50px;font-size:9.75px;color:#7a7a7a;line-height:14px;-webkit-text-stroke:.4px #7a7a7a;">Pick</span>
<span class="t" style="left:112px;top:293.50px;font-size:10.25px;color:#cfcfcf;line-height:14px;letter-spacing:0.035px;-webkit-text-stroke:.4px #cfcfcf;">Transfer</span>
<span class="t" style="left:176px;top:293.50px;font-size:10.0px;color:#cfcfcf;line-height:14px;letter-spacing:-0.069px;-webkit-text-stroke:.4px #cfcfcf;">Merge</span>
<span class="t" style="left:230px;top:293.50px;font-size:10.0px;color:#cfcfcf;line-height:14px;-webkit-text-stroke:.4px #cfcfcf;">Split</span>
<span class="t" style="left:551.6px;top:293.20px;font-size:7.25px;color:#555;line-height:14px;letter-spacing:0.036px;">1 - 10 of 35</span>
<span class="t" style="left:82px;top:316.00px;font-size:9.0px;color:#3d8fc0;line-height:14px;">bryan,</span>
<span class="t" style="left:108px;top:316.50px;font-size:9.0px;color:#5a5a5a;line-height:14px;filter:blur(1.1px);">Ayushi Bha...</span>
<span class="t" style="left:224.8px;top:315.70px;font-size:7.5px;color:#2f7fb5;line-height:14px;letter-spacing:0.074px;-webkit-text-stroke:.35px #2f7fb5;">New</span>
<span class="t" style="left:82px;top:329.50px;font-size:7.75px;color:#3a3a3a;line-height:14px;letter-spacing:0.049px;-webkit-text-stroke:.2px #3a3a3a;">Ticket corresponding to call: d439-5a900f3...</span>
<span class="t" style="left:400.6px;top:319.00px;font-size:7.25px;color:#6a8fa8;line-height:14px;letter-spacing:-0.036px;">1</span>
<span class="t" style="left:451.4px;top:317.30px;font-size:7.25px;color:#a8353a;line-height:14px;-webkit-text-stroke:.35px #a8353a;">- 137d 0s FR</span>
<span class="t" style="left:446.5px;top:327.90px;font-size:7.5px;color:#c9c9c9;line-height:14px;letter-spacing:-0.055px;">First Response</span>
<span class="t" style="left:525.7px;top:315.50px;font-size:8.0px;color:#4f8f3f;line-height:14px;letter-spacing:-0.075px;-webkit-text-stroke:.35px #4f8f3f;">Low</span>
<span class="t" style="left:575.5px;top:316.30px;font-size:8.4px;color:#5a5a5a;line-height:14px;letter-spacing:0.070px;">Multimedia_Sup...</span>
<span class="t" style="left:581.4px;top:326.60px;font-size:8.4px;color:#5a5a5a;line-height:14px;letter-spacing:-0.231px;">BLR_ExpoQueue</span>
<span class="t" style="left:667px;top:314.20px;font-size:8px;color:#5a5a5a;line-height:14px;letter-spacing:-0.361px;">27 Feb, 2018</span>
<span class="t" style="left:691.6px;top:324.00px;font-size:8px;color:#5a5a5a;line-height:14px;letter-spacing:-0.231px;">11:19</span>
<span class="t" style="left:683px;top:333.60px;font-size:7.25px;color:#aaa;line-height:14px;letter-spacing:-0.055px;">Modified</span>
<span class="t" style="left:82px;top:349.75px;font-size:9.0px;color:#3d8fc0;line-height:14px;">bryan,</span>
<span class="t" style="left:108px;top:350.25px;font-size:9.0px;color:#5a5a5a;line-height:14px;filter:blur(1.1px);">Ayushi Bha...</span>
<span class="t" style="left:224.8px;top:349.45px;font-size:7.5px;color:#2f7fb5;line-height:14px;letter-spacing:0.074px;-webkit-text-stroke:.35px #2f7fb5;">New</span>
<span class="t" style="left:82px;top:363.25px;font-size:7.75px;color:#3a3a3a;line-height:14px;letter-spacing:-0.044px;-webkit-text-stroke:.2px #3a3a3a;">Ticket corresponding to call: d871-5aa69777...</span>
<span class="t" style="left:400.6px;top:352.75px;font-size:7.25px;color:#6a8fa8;line-height:14px;letter-spacing:-0.036px;">1</span>
<span class="t" style="left:451.4px;top:351.05px;font-size:7.25px;color:#a8353a;line-height:14px;-webkit-text-stroke:.35px #a8353a;">- 123d 4h FR</span>
<span class="t" style="left:446.5px;top:361.65px;font-size:7.5px;color:#c9c9c9;line-height:14px;letter-spacing:-0.055px;">First Response</span>
<span class="t" style="left:525.7px;top:349.25px;font-size:8.0px;color:#4f8f3f;line-height:14px;letter-spacing:-0.075px;-webkit-text-stroke:.35px #4f8f3f;">Low</span>
<span class="t" style="left:575.5px;top:350.05px;font-size:8.4px;color:#5a5a5a;line-height:14px;letter-spacing:0.070px;">Multimedia_Sup...</span>
<span class="t" style="left:581.4px;top:360.35px;font-size:8.4px;color:#5a5a5a;line-height:14px;letter-spacing:-0.231px;">BLR_ExpoQueue</span>
<span class="t" style="left:666px;top:347.95px;font-size:8px;color:#5a5a5a;line-height:14px;letter-spacing:-0.235px;">16 Mar, 2018</span>
<span class="t" style="left:691.6px;top:357.75px;font-size:8px;color:#5a5a5a;line-height:14px;letter-spacing:-0.363px;">15:28</span>
<span class="t" style="left:683px;top:367.35px;font-size:7.25px;color:#aaa;line-height:14px;letter-spacing:-0.055px;">Modified</span>
<span class="t" style="left:82px;top:383.50px;font-size:9.0px;color:#3d8fc0;line-height:14px;letter-spacing:-0.194px;">Unassigned,</span>
<span class="t" style="left:131px;top:384.00px;font-size:9.0px;color:#5a5a5a;line-height:14px;filter:blur(1.1px);">Ayushi Bha...</span>
<span class="t" style="left:224.8px;top:383.20px;font-size:7.5px;color:#2f7fb5;line-height:14px;letter-spacing:0.074px;-webkit-text-stroke:.35px #2f7fb5;">New</span>
<span class="t" style="left:82px;top:397.00px;font-size:7.75px;color:#3a3a3a;line-height:14px;-webkit-text-stroke:.2px #3a3a3a;">Ticket corresponding to call: d356-5acccf5e...</span>
<span class="t" style="left:400.6px;top:386.50px;font-size:7.25px;color:#6a8fa8;line-height:14px;letter-spacing:-0.036px;">1</span>
<span class="t" style="left:455.3px;top:384.80px;font-size:7.5px;color:#a8353a;line-height:14px;-webkit-text-stroke:.35px #a8353a;">- 95d 19h A</span>
<span class="t" style="left:467px;top:395.40px;font-size:7.0px;color:#c9c9c9;line-height:14px;letter-spacing:0.053px;">Assigned</span>
<span class="t" style="left:525.7px;top:383.00px;font-size:8.0px;color:#4f8f3f;line-height:14px;letter-spacing:-0.075px;-webkit-text-stroke:.35px #4f8f3f;">Low</span>
<span class="t" style="left:575.5px;top:383.80px;font-size:8.4px;color:#5a5a5a;line-height:14px;letter-spacing:0.070px;">Multimedia_Sup...</span>
<span class="t" style="left:581.4px;top:394.10px;font-size:8.4px;color:#5a5a5a;line-height:14px;letter-spacing:-0.231px;">BLR_ExpoQueue</span>
<span class="t" style="left:667.5px;top:381.70px;font-size:8px;color:#5a5a5a;line-height:14px;letter-spacing:-0.212px;">16 Apr, 2018</span>
<span class="t" style="left:691.6px;top:391.50px;font-size:8px;color:#5a5a5a;line-height:14px;letter-spacing:-0.363px;">14:54</span>
<span class="t" style="left:683px;top:401.10px;font-size:7.25px;color:#aaa;line-height:14px;letter-spacing:-0.055px;">Modified</span>
<span class="t" style="left:82px;top:417.25px;font-size:9.0px;color:#3d8fc0;line-height:14px;letter-spacing:-0.194px;">Unassigned,</span>
<span class="t" style="left:131px;top:417.75px;font-size:9.0px;color:#5a5a5a;line-height:14px;filter:blur(1.1px);">Ayushi Bha...</span>
<span class="t" style="left:224.8px;top:416.95px;font-size:7.5px;color:#2f7fb5;line-height:14px;letter-spacing:0.074px;-webkit-text-stroke:.35px #2f7fb5;">New</span>
<span class="t" style="left:82px;top:430.75px;font-size:7.75px;color:#3a3a3a;line-height:14px;-webkit-text-stroke:.2px #3a3a3a;">Ticket corresponding to call: d356-5acccf5e...</span>
<span class="t" style="left:400.6px;top:420.25px;font-size:7.25px;color:#6a8fa8;line-height:14px;letter-spacing:-0.036px;">1</span>
<span class="t" style="left:455.3px;top:418.55px;font-size:7.5px;color:#a8353a;line-height:14px;-webkit-text-stroke:.35px #a8353a;">- 95d 19h A</span>
<span class="t" style="left:467px;top:429.15px;font-size:7.0px;color:#c9c9c9;line-height:14px;letter-spacing:0.053px;">Assigned</span>
<span class="t" style="left:525.7px;top:416.75px;font-size:8.0px;color:#4f8f3f;line-height:14px;letter-spacing:-0.075px;-webkit-text-stroke:.35px #4f8f3f;">Low</span>
<span class="t" style="left:575.5px;top:417.55px;font-size:8.4px;color:#5a5a5a;line-height:14px;letter-spacing:0.070px;">Multimedia_Sup...</span>
<span class="t" style="left:581.4px;top:427.85px;font-size:8.4px;color:#5a5a5a;line-height:14px;letter-spacing:-0.231px;">BLR_ExpoQueue</span>
<span class="t" style="left:667.5px;top:415.45px;font-size:8px;color:#5a5a5a;line-height:14px;letter-spacing:-0.212px;">16 Apr, 2018</span>
<span class="t" style="left:691.6px;top:425.25px;font-size:8px;color:#5a5a5a;line-height:14px;letter-spacing:-0.363px;">15:50</span>
<span class="t" style="left:683px;top:434.85px;font-size:7.25px;color:#aaa;line-height:14px;letter-spacing:-0.055px;">Modified</span>
<span class="t" style="left:19.5px;top:454.00px;font-size:8.5px;color:#3a3a3a;line-height:14px;letter-spacing:0.054px;-webkit-text-stroke:.2px #3a3a3a;">CRM</span>
<span class="t" style="left:851px;top:43.70px;font-size:7.0px;color:#8a8a8a;line-height:14px;letter-spacing:-0.073px;">Web RTC</span>
<span class="t" style="left:837.5px;top:59.00px;font-size:10.75px;color:#333;line-height:14px;letter-spacing:-0.052px;">9911522255</span>
<span class="t" style="left:837.5px;top:72.00px;font-size:9.0px;color:#6aa84f;line-height:14px;">Connected</span>
<span class="t" style="left:773px;top:98.30px;font-size:9.0px;color:#8a8a8a;line-height:14px;letter-spacing:-0.031px;">Campaign</span>
<span class="t" style="left:846.8px;top:98.30px;font-size:9.5px;color:#4a4a4a;line-height:14px;">Customer Support</span>
<span class="t" style="left:780.2px;top:113.70px;font-size:9.0px;color:#8a8a8a;line-height:14px;letter-spacing:-0.051px;">Queue</span>
<span class="t" style="left:840px;top:166.00px;font-size:9.25px;color:#fff;line-height:14px;font-weight:bold;">End Call</span>
<span class="t" style="left:839.6px;top:175.20px;font-size:9.25px;color:#fff;line-height:14px;font-weight:bold;letter-spacing:0.049px;">00:00:07</span>
<span class="t" style="left:752.8px;top:261.30px;font-size:10.75px;color:#555;line-height:14px;letter-spacing:-0.022px;">Search ...</span>
<span class="t" style="left:916px;top:262.00px;font-size:10.25px;color:#fff;line-height:14px;letter-spacing:0.059px;">Search</span>
<span class="t" style="left:754.9px;top:288.90px;font-size:9.5px;color:#444;line-height:14px;font-weight:bold;">How can I pay my credit card bills?</span>
<span class="t" style="left:754.9px;top:314.20px;font-size:9.5px;color:#444;line-height:14px;font-weight:bold;">How do I find the credit card due</span>
<span class="t" style="left:754.9px;top:326.80px;font-size:9.25px;color:#444;line-height:14px;font-weight:bold;letter-spacing:-0.021px;">amount?</span>
<span class="t" style="left:754.9px;top:351.70px;font-size:9.5px;color:#444;line-height:14px;font-weight:bold;">What are the key charges applicable to</span>
<span class="t" style="left:754.9px;top:364.30px;font-size:9.5px;color:#444;line-height:14px;font-weight:bold;letter-spacing:-0.043px;">credit cards?</span>
<span class="t" style="left:754.9px;top:388.70px;font-size:9.5px;color:#444;line-height:14px;font-weight:bold;">What should I do if I lose my card or if</span>
<span class="t" style="left:754.9px;top:401.30px;font-size:9.25px;color:#444;line-height:14px;font-weight:bold;letter-spacing:0.053px;">my card is stolen?</span>
<span class="t" style="left:754.9px;top:425.70px;font-size:9.5px;color:#444;line-height:14px;font-weight:bold;">How long does it take to apply for and</span>
<span class="t" style="left:754.9px;top:438.30px;font-size:9.5px;color:#444;line-height:14px;font-weight:bold;">receive a Credit Card?</span>
</body></html>
